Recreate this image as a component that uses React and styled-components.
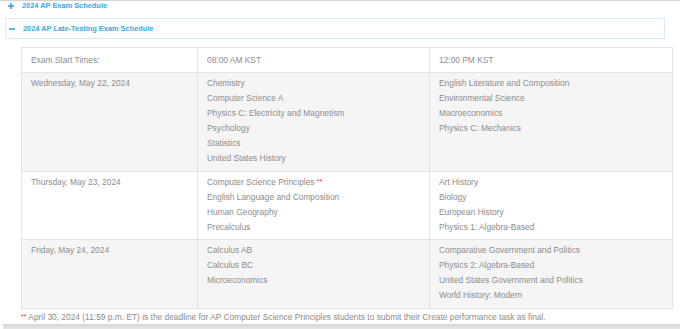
import React from "react";
import styled, { createGlobalStyle } from "styled-components";

const GlobalStyle = createGlobalStyle`
  html, body {
    margin: 0;
    padding: 0;
    background: #fff;
  }

  body {
    font-family: "Liberation Sans", Arial, sans-serif;
  }
`;

const schedule = [
  {
    day: "Wednesday, May 22, 2024",
    morning: [
      "Chemistry",
      "Computer Science A",
      "Physics C: Electricity and Magnetism",
      "Psychology",
      "Statistics",
      "United States History",
    ],
    afternoon: [
      "English Literature and Composition",
      "Environmental Science",
      "Macroeconomics",
      "Physics C: Mechanics",
    ],
  },
  {
    day: "Thursday, May 23, 2024",
    morning: [
      { name: "Computer Science Principles", note: true },
      "English Language and Composition",
      "Human Geography",
      "Precalculus",
    ],
    afternoon: [
      "Art History",
      "Biology",
      "European History",
      "Physics 1: Algebra-Based",
    ],
  },
  {
    day: "Friday, May 24, 2024",
    morning: ["Calculus AB", "Calculus BC", "Microeconomics"],
    afternoon: [
      "Comparative Government and Politics",
      "Physics 2: Algebra-Based",
      "United States Government and Politics",
      "World History: Modern",
    ],
  },
];

const Page = styled.div`
  width: 680px;
  border-top: 1px solid #d2d2d2;
`;

const Accordion = styled.div`
  padding: 0 15px 0 5px;
`;

const Panel = styled.section`
  border: 1px solid ${({ open }) => (open ? "#d5edfa" : "transparent")};
  margin-top: ${({ first }) => (first ? "-1px" : "7px")};
`;

const PanelHeader = styled.div`
  display: flex;
  align-items: center;
  gap: 8px;
  height: ${({ open }) => (open ? "19px" : "9px")};
  padding-left: ${({ open }) => (open ? "3px" : "2px")};
  color: #33aae6;
  font-size: 7.4px;
  font-weight: bold;
  cursor: pointer;
`;

const PanelBody = styled.div`
  padding: 8px 0 0 16px;
`;

const Schedule = styled.table`
  width: 651px;
  table-layout: fixed;
  border-collapse: collapse;
  font-size: 8.4px;
  color: #8c8c8c;
`;

const HeadCell = styled.td`
  border: 1px solid #e3e3e3;
  padding: 5px 9px 5px 9px;
  line-height: 14px;
  vertical-align: top;
  background: #fff;
`;

const Row = styled.tr`
  background: ${({ shaded }) => (shaded ? "#f5f5f5" : "#fff")};
`;

const Cell = styled.td`
  border: 1px solid #e3e3e3;
  padding: 3px 9px 4.5px 9px;
  vertical-align: top;
`;

const Line = styled.div`
  line-height: 15px;
`;

const Stars = styled.span`
  color: #e8322b;
  font-size: 7px;
  position: relative;
  top: -1px;
`;

const Footnote = styled.p`
  margin: 3px 0 0 0;
  font-size: 8.4px;
  line-height: 10px;
  color: #8c8c8c;
`;

const BottomShade = styled.div`
  margin: 1px 0 0 3px;
  height: 6px;
  background: linear-gradient(to bottom, #d6d6d6, #ebebeb);
`;

function ToggleIcon({ open }) {
  return (
    <svg width="6" height="6" viewBox="0 0 6 6">
      <rect x="0" y="2.2" width="6" height="1.6" fill="#33aae6" />
      {!open && <rect x="2.2" y="0" width="1.6" height="6" fill="#33aae6" />}
    </svg>
  );
}

function Subject({ item }) {
  if (typeof item === "string") return <Line>{item}</Line>;
  return (
    <Line>
      {item.name} {item.note && <Stars>**</Stars>}
    </Line>
  );
}

export default function App() {
  return (
    <Page>
      <GlobalStyle />
      <Accordion>
        <Panel first>
          <PanelHeader>
            <ToggleIcon />
            2024 AP Exam Schedule
          </PanelHeader>
        </Panel>
        <Panel open>
          <PanelHeader open>
            <ToggleIcon open />
            2024 AP Late-Testing Exam Schedule
          </PanelHeader>
        </Panel>
        <PanelBody>
          <Schedule>
            <colgroup>
              <col style={{ width: 176 }} />
              <col style={{ width: 232 }} />
              <col style={{ width: 243 }} />
            </colgroup>
            <tbody>
              <tr>
                <HeadCell>Exam Start Times:</HeadCell>
                <HeadCell>08:00 AM KST</HeadCell>
                <HeadCell>12:00 PM KST</HeadCell>
              </tr>
              {schedule.map((row, i) => (
                <Row key={row.day} shaded={i % 2 === 0}>
                  <Cell>
                    <Line>{row.day}</Line>
                  </Cell>
                  <Cell>
                    {row.morning.map((s) => (
                      <Subject key={s.name || s} item={s} />
                    ))}
                  </Cell>
                  <Cell>
                    {row.afternoon.map((s) => (
                      <Subject key={s} item={s} />
                    ))}
                  </Cell>
                </Row>
              ))}
            </tbody>
          </Schedule>
          <Footnote>
            <Stars>**</Stars> April 30, 2024 (11:59 p.m. ET) is the deadline
            for AP Computer Science Principles students to submit their Create
            performance task as final.
          </Footnote>
        </PanelBody>
      </Accordion>
      <BottomShade />
    </Page>
  );
}
